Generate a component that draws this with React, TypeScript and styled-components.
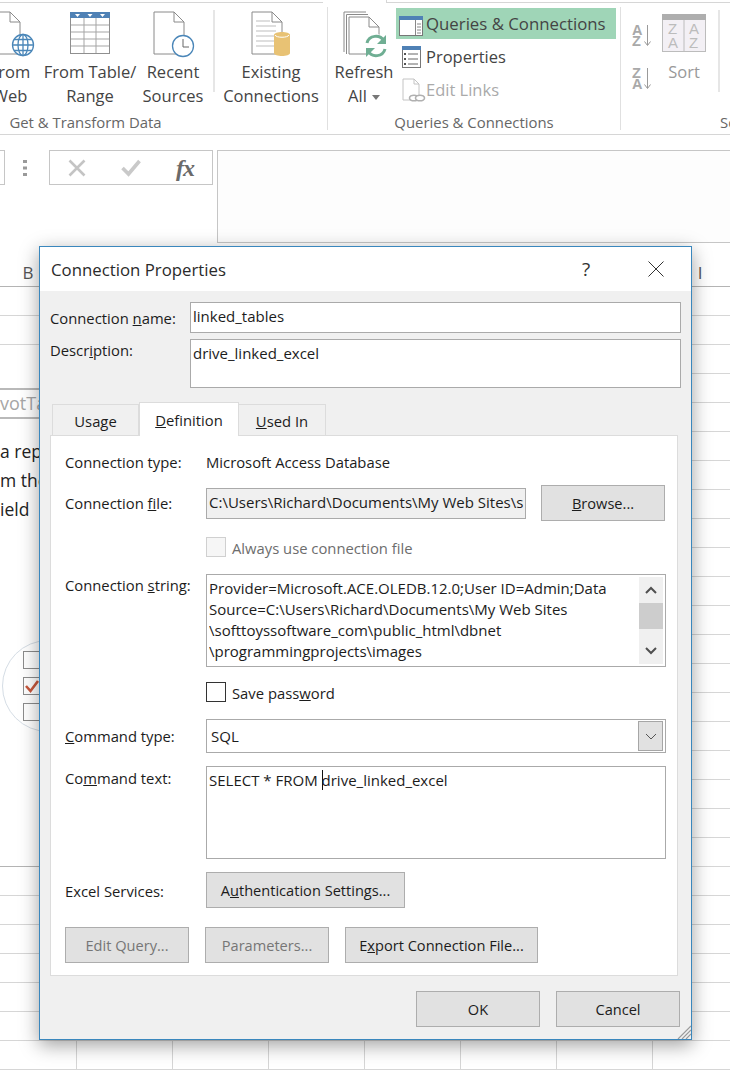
import React from "react";
import styled, { createGlobalStyle } from "styled-components";

const uiFont = `"Open Sans", "Noto Sans", sans-serif`;

const GlobalStyle = createGlobalStyle`
  html, body {
    margin: 0;
    padding: 0;
    background: #fff;
    font-family: ${uiFont};
  }
`;

const Page = styled.div`
  position: relative;
  width: 730px;
  height: 1072px;
  overflow: hidden;
  background: #fff;
`;

/* ribbon */
const Ribbon = styled.div`
  height: 135px;
  box-sizing: border-box;
  border-bottom: 1px solid #d6d6d6;
  color: #444;
`;
const RibbonEdge = styled.div`
  display: flex;
  height: 3px;
  box-sizing: border-box;
`;
const EdgeLine = styled.div<{ $w?: number }>`
  ${({ $w }) => ($w ? `width: ${$w}px;` : "flex: 1;")}
  border-bottom: 1px solid #d6d6d6;
`;
const ActiveTabGap = styled.div`
  width: 64px;
  border-right: 1px solid #d6d6d6;
  box-sizing: border-box;
`;
const RibbonBody = styled.div`
  display: flex;
  margin-left: -156px;
`;
const Group = styled.div<{ $w: number; $line?: boolean }>`
  width: ${({ $w }) => $w}px;
  flex: none;
  box-sizing: border-box;
  margin-top: 4px;
  height: 123px;
  display: flex;
  flex-direction: column;
  border-right: ${({ $line }) => ($line ? "1px solid #e0e0e0" : "none")};
`;
const GroupItems = styled.div<{ $pl?: number }>`
  display: flex;
  height: 105px;
  padding-top: 3px;
  box-sizing: border-box;
  padding-left: ${({ $pl }) => $pl ?? 0}px;
`;
const GroupLabel = styled.div<{ $pl?: number }>`
  font-size: 14.9px;
  line-height: 20px;
  height: 18px;
  color: #666;
  white-space: nowrap;
  text-align: ${({ $pl }) => ($pl ? "left" : "center")};
  padding-left: ${({ $pl }) => $pl ?? 0}px;
`;
const LargeButton = styled.div<{ $w: number; $ml?: number }>`
  width: ${({ $w }) => $w}px;
  margin-left: ${({ $ml }) => $ml ?? 0}px;
  flex: none;
  display: flex;
  flex-direction: column;
  align-items: center;
  font-size: 16.5px;
  line-height: 24px;
  white-space: nowrap;
  svg {
    flex: none;
    margin-bottom: 2px;
  }
`;
const SplitLabel = styled.span`
  display: flex;
  align-items: center;
  gap: 5px;
  svg {
    margin: 2px 0 0;
  }
`;
const InnerSeparator = styled.div<{ $ml?: number }>`
  width: 2px;
  height: 82px;
  flex: none;
  margin-left: ${({ $ml }) => $ml ?? 0}px;
  background: #e6e6e6;
`;
const SmallList = styled.div`
  width: 220px;
  margin: -2px 0 0 2px;
  flex: none;
  display: flex;
  flex-direction: column;
  gap: 2px;
`;
const SmallItem = styled.div<{ $active?: boolean; $off?: boolean }>`
  height: 31px;
  display: flex;
  align-items: center;
  font-size: ${({ $active }) => ($active ? 16.8 : 16.5)}px;
  white-space: nowrap;
  background: ${({ $active }) => ($active ? "#9fd5b7" : "transparent")};
  color: ${({ $off }) => ($off ? "#aaa" : "#444")};
  svg {
    flex: none;
    width: 30px;
  }
`;
const SortStack = styled.div`
  display: flex;
  flex-direction: column;
  margin: 14px 0 0 11px;
  gap: 21px;
  width: 21px;
  flex: none;
`;
const SortButton = styled(LargeButton)`
  color: #999;
  svg {
    margin-top: 4px;
    margin-bottom: 8px;
  }
`;

/* formula bar */
const FormulaBar = styled.div`
  height: 108px;
  box-sizing: border-box;
  padding-top: 15px;
  display: flex;
  align-items: flex-start;
`;
const NameBoxEnd = styled.div`
  width: 5px;
  height: 35px;
  box-sizing: border-box;
  border: 1px solid #c6c6c6;
  border-left: none;
`;
const Grip = styled.div`
  width: 44px;
  height: 35px;
  flex: none;
  display: flex;
  align-items: center;
  justify-content: center;
  padding-right: 4px;
  box-sizing: border-box;
`;
const FormulaTools = styled.div`
  width: 164px;
  height: 35px;
  flex: none;
  box-sizing: border-box;
  border: 1px solid #c6c6c6;
  display: flex;
  align-items: center;
  justify-content: space-between;
  padding: 0 18px 0 18px;
`;
const FxLabel = styled.span`
  font-family: "Liberation Serif", serif;
  font-style: italic;
  font-weight: bold;
  font-size: 24px;
  letter-spacing: -1px;
  line-height: 30px;
  color: #6a6a6a;
`;
const FormulaInput = styled.div`
  flex: 1;
  margin-left: 4px;
  height: 93px;
  box-sizing: border-box;
  border: 1px solid #c6c6c6;
  border-right: none;
  background: #fdfdfd;
`;

/* sheet */
const HeaderRow = styled.div`
  display: flex;
  height: 44px;
  margin-left: -20px;
  box-sizing: border-box;
  border-bottom: 1px solid #b4b4b4;
`;
const ColumnHead = styled.div`
  width: 96px;
  flex: none;
  text-align: center;
  font-size: 17px;
  line-height: 20px;
  padding-top: 20px;
  color: #555;
`;
const SheetRow = styled.div`
  display: flex;
  height: 29px;
  margin-left: -19px;
`;
const Cell = styled.div`
  width: 96px;
  flex: none;
  box-sizing: border-box;
  border-right: 1px solid #d6d6d6;
  border-bottom: 1px solid #d6d6d6;
`;

/* pivot table placeholder that lies on the sheet */
const PivotPlaceholder = styled.div`
  position: absolute;
  left: 0;
  top: 345px;
  width: 60px;
  height: 522px;
  box-sizing: border-box;
  background: #fff;
  border-bottom: 1px solid #b4b4b4;
  padding-top: 43px;
  overflow: hidden;
`;
const PivotName = styled.div`
  height: 31px;
  box-sizing: border-box;
  border-top: 2px solid #b9b9b9;
  border-bottom: 2px solid #b9b9b9;
  font-size: 18px;
  line-height: 27px;
  color: #a6a6a6;
  white-space: nowrap;
`;
const PivotHint = styled.div`
  margin-top: 18px;
  font-size: 17.5px;
  line-height: 29px;
  color: #222;
  white-space: nowrap;
`;
const FieldCircle = styled.div`
  margin: 116px 0 0 2px;
  width: 92px;
  height: 92px;
  box-sizing: border-box;
  border: 1px solid #d5dde5;
  border-radius: 50%;
  padding: 10px 0 0 20px;
  display: flex;
  flex-direction: column;
  gap: 8px;
`;
const FieldBox = styled.div`
  width: 18px;
  height: 18px;
  box-sizing: border-box;
  border: 1px solid #8c8c8c;
  background: #fff;
  svg {
    display: block;
  }
`;

/* dialog */
const Dialog = styled.div`
  position: absolute;
  left: 39px;
  top: 246px;
  width: 653px;
  height: 794px;
  box-sizing: border-box;
  border: 1px solid #3a87bd;
  background: #f0f0f0;
  box-shadow: 0 5px 18px rgba(0, 0, 0, 0.38);
  color: #1c1c1c;
  font-size: 14.8px;
  display: flex;
  flex-direction: column;
`;
const TitleBar = styled.div`
  height: 44px;
  flex: none;
  background: #fff;
  display: flex;
  align-items: center;
  padding-left: 11px;
`;
const Title = styled.div`
  flex: 1;
  font-size: 16.8px;
  color: #2a2a2a;
`;
const HelpMark = styled.div`
  width: 70px;
  font-size: 19px;
  color: #333;
  text-align: center;
`;
const CloseMark = styled.div`
  width: 70px;
  display: flex;
  justify-content: center;
`;
const DialogBody = styled.div`
  flex: 1;
  padding: 11px 10px 0;
  display: flex;
  flex-direction: column;
`;
const MetaRow = styled.div<{ $mt?: number }>`
  display: flex;
  margin-top: ${({ $mt }) => $mt ?? 0}px;
`;
const MetaLabel = styled.div<{ $pt: number }>`
  width: 140px;
  flex: none;
  padding-top: ${({ $pt }) => $pt}px;
  line-height: 20px;
`;
const TextBox = styled.div<{ $h: number; $grey?: boolean; $w?: number }>`
  ${({ $w }) => ($w ? `width: ${$w}px; flex: none;` : "flex: 1;")}
  height: ${({ $h }) => $h}px;
  box-sizing: border-box;
  border: 1px solid #aaa;
  background: ${({ $grey }) => ($grey ? "#f0f0f0" : "#fff")};
  padding: 2px;
  font-size: 15px;
  line-height: 22px;
  white-space: nowrap;
  overflow: hidden;
`;
const Tabs = styled.div`
  display: flex;
  align-items: flex-end;
  margin: 14px 0 0 2px;
  height: 34px;
  position: relative;
  z-index: 1;
`;
const Tab = styled.div<{ $active?: boolean }>`
  box-sizing: border-box;
  width: ${({ $active }) => ($active ? 100 : 87)}px;
  height: ${({ $active }) => ($active ? 34 : 32)}px;
  border: 1px solid #dcdcdc;
  border-left-width: ${({ $active }) => ($active ? 1 : 0)}px;
  border-bottom: ${({ $active }) => ($active ? "none" : "1px solid #dcdcdc")};
  background: ${({ $active }) => ($active ? "#fff" : "#f0f0f0")};
  text-align: center;
  line-height: ${({ $active }) => ($active ? 34 : 33)}px;
  &:first-child {
    border-left-width: 1px;
  }
`;
const TabPanel = styled.div`
  width: 628px;
  height: 541px;
  margin-top: -1px;
  box-sizing: border-box;
  border: 1px solid #dcdcdc;
  background: #fff;
  padding: 14px 11px 0 14px;
  display: flex;
  flex-direction: column;
`;
const FormRow = styled.div<{ $mt?: number; $center?: boolean; $h?: number }>`
  display: flex;
  align-items: ${({ $center }) => ($center ? "center" : "flex-start")};
  margin-top: ${({ $mt }) => $mt ?? 0}px;
  ${({ $h }) => ($h ? `height: ${$h}px;` : "")}
`;
const FormLabel = styled.div<{ $pt?: number }>`
  width: 141px;
  flex: none;
  padding-top: ${({ $pt }) => $pt ?? 0}px;
  line-height: 22px;
  white-space: nowrap;
`;
const FormValue = styled.div`
  line-height: 24px;
`;
const PushButton = styled.div<{ $w: number; $off?: boolean; $ml?: number }>`
  width: ${({ $w }) => $w}px;
  height: 36px;
  flex: none;
  margin-left: ${({ $ml }) => $ml ?? 0}px;
  box-sizing: border-box;
  border: 1px solid #adadad;
  background: #e1e1e1;
  font-size: 14.6px;
  color: ${({ $off }) => ($off ? "#767676" : "#1c1c1c")};
  display: flex;
  align-items: center;
  justify-content: center;
  white-space: nowrap;
`;
const CheckRow = styled.div<{ $off?: boolean }>`
  display: flex;
  align-items: center;
  gap: 6px;
  color: ${({ $off }) => ($off ? "#6d6d6d" : "#1c1c1c")};
  line-height: 22px;
  height: 20px;
`;
const CheckText = styled.span`
  padding-top: 2px;
`;
const CheckBox = styled.div<{ $off?: boolean }>`
  width: 20px;
  height: 20px;
  box-sizing: border-box;
  border: 1px solid ${({ $off }) => ($off ? "#d0d0d0" : "#333")};
  background: ${({ $off }) => ($off ? "#f6f6f6" : "#fff")};
`;
const StringBox = styled.div`
  width: 460px;
  height: 93px;
  flex: none;
  box-sizing: border-box;
  border: 1px solid #aaa;
  display: flex;
  padding: 2px;
`;
const StringText = styled.div`
  flex: 1;
  padding-top: 1px;
  font-size: 15px;
  line-height: 21px;
  white-space: nowrap;
  overflow: hidden;
`;
const ScrollBar = styled.div`
  width: 24px;
  flex: none;
  background: #f0f0f0;
  display: flex;
  flex-direction: column;
  align-items: center;
`;
const ScrollArrow = styled.div`
  height: 26px;
  flex: none;
  width: 100%;
  display: flex;
  align-items: center;
  justify-content: center;
`;
const ScrollThumb = styled.div`
  height: 26px;
  width: 100%;
  flex: none;
  background: #cdcdcd;
`;
const ScrollTrack = styled.div`
  flex: 1;
`;
const SelectBox = styled.div`
  width: 460px;
  height: 34px;
  flex: none;
  box-sizing: border-box;
  border: 1px solid #aaa;
  display: flex;
  align-items: center;
  justify-content: space-between;
  padding: 0 2px 0 4px;
  font-size: 15px;
`;
const SelectArrow = styled.div`
  width: 25px;
  height: 30px;
  box-sizing: border-box;
  border: 1px solid #a6a6a6;
  background: #e1e1e1;
  display: flex;
  align-items: center;
  justify-content: center;
`;
const CommandBox = styled.div`
  width: 460px;
  height: 93px;
  flex: none;
  box-sizing: border-box;
  border: 1px solid #aaa;
  padding: 2px;
  font-size: 15px;
  line-height: 22px;
`;
const Caret = styled.span`
  border-left: 1px solid #111;
  margin-right: -1px;
`;
const ButtonRow = styled.div<{ $mt: number; $right?: boolean }>`
  display: flex;
  gap: 16px;
  margin-top: ${({ $mt }) => $mt}px;
  margin-right: ${({ $right }) => ($right ? 1 : 0)}px;
  justify-content: ${({ $right }) => ($right ? "flex-end" : "flex-start")};
`;
const ResizeGrip = styled.svg`
  position: absolute;
  right: 0;
  bottom: 0;
`;

const WebIcon = () => (
  <svg width="50" height="48" viewBox="0 0 50 48">
    <path d="M10 2H25L35 12V44H10Z" fill="#fff" stroke="#8a8a8a" />
    <path d="M25 2V12H35" fill="none" stroke="#8a8a8a" />
    <g fill="#fff" stroke="#4a86b8" strokeWidth="1.3">
      <circle cx="38" cy="35" r="10.5" />
      <ellipse cx="38" cy="35" rx="5" ry="10.5" />
      <path d="M38 24.5V45.5M27.5 35H48.5M29 29.5H47M29 40.5H47" />
    </g>
  </svg>
);

const TableIcon = () => (
  <svg width="42" height="48" viewBox="0 0 42 48">
    <rect x="1.5" y="2.5" width="39" height="41" fill="#fff" stroke="#8f8f8f" />
    <rect x="1" y="2" width="40" height="6" fill="#4f81b5" />
    <path d="M15 8V43M27 8V43M2 15H40M2 22H40M2 29H40M2 36H40" stroke="#a5a5a5" fill="none" />
    <path d="M6 4H11L8.5 7ZM18.5 4H23.5L21 7ZM31 4H36L33.5 7Z" fill="#fff" />
  </svg>
);

const RecentIcon = () => (
  <svg width="44" height="48" viewBox="0 0 44 48">
    <path d="M3 2H23L33 12V44H3Z" fill="#fff" stroke="#8a8a8a" />
    <path d="M23 2V12H33" fill="none" stroke="#8a8a8a" />
    <circle cx="32" cy="36" r="10.5" fill="#fff" stroke="#4a86b8" strokeWidth="1.3" />
    <path d="M32 29V37H38" fill="none" stroke="#666" />
  </svg>
);

const ExistingIcon = () => (
  <svg width="44" height="48" viewBox="0 0 44 48">
    <path d="M3 2H23L33 12V44H3Z" fill="#fff" stroke="#8a8a8a" />
    <path d="M23 2V12H33" fill="none" stroke="#8a8a8a" />
    <path d="M7 11H21M7 16H27M7 21H27M7 26H27M7 31H27M7 36H27" stroke="#bdbdbd" />
    <path d="M25 25C25 21 41 21 41 25V43C41 47 25 47 25 43Z" fill="#e8c274" />
    <path d="M26 25C27 28 39 28 40 25" fill="none" stroke="#fff" />
  </svg>
);

const RefreshIcon = () => (
  <svg width="50" height="48" viewBox="0 0 50 48">
    <path d="M5 42V2H27M7.5 44V4.500H29M10 44V7H30L40 17V44Z" fill="#fff" stroke="#8a8a8a" />
    <path d="M30 7V17H40" fill="none" stroke="#8a8a8a" />
    <circle cx="37" cy="36" r="12" fill="#fff" />
    <path d="M28 33C30 25 41 24 45 31" fill="none" stroke="#6fae93" strokeWidth="3" />
    <path d="M47 25V34H38Z" fill="#6fae93" />
    <path d="M46 39C44 47 33 48 29 41" fill="none" stroke="#6fae93" strokeWidth="3" />
    <path d="M27 47V38H36Z" fill="#6fae93" />
  </svg>
);

const DropCaret = () => (
  <svg width="8" height="5" viewBox="0 0 8 5">
    <path d="M0 0H8L4 5Z" fill="#777" />
  </svg>
);

const QueriesIcon = () => (
  <svg height="24" viewBox="0 0 30 24">
    <rect x="3.500" y="4.500" width="23" height="19" fill="#fff" stroke="#777" />
    <rect x="3" y="4" width="24" height="4" fill="#4f81b5" />
    <path d="M19.500 8V23M21 12H25M21 15H25M21 18H25M21 21H25" stroke="#888" fill="none" />
  </svg>
);

const PropertiesIcon = () => (
  <svg height="24" viewBox="0 0 30 24">
    <rect x="6.500" y="1.500" width="18" height="21" fill="#fff" stroke="#777" />
    <rect x="6" y="1" width="19" height="4" fill="#4f81b5" />
    <path d="M12 9H22M12 14H22M12 19H22" stroke="#666" fill="none" />
    <path d="M8 9H10M8 14H10M8 19H10" stroke="#555" strokeWidth="2" fill="none" />
  </svg>
);

const EditLinksIcon = () => (
  <svg height="24" viewBox="0 0 30 24">
    <path d="M7 1H18L23 6V22H7Z" fill="#fff" stroke="#c4c4c4" />
    <path d="M18 1V6H23" fill="none" stroke="#c4c4c4" />
    <g fill="#fff" stroke="#b0b0b0" strokeWidth="1.6">
      <ellipse cx="18" cy="20" rx="4.500" ry="2.800" />
      <ellipse cx="24" cy="20" rx="4.500" ry="2.800" />
    </g>
  </svg>
);

const SortLetters = ({ top, bottom }: { top: string; bottom: string }) => (
  <svg width="21" height="22" viewBox="0 0 21 22" display="block">
    <text x="0" y="10.500" fontFamily="Liberation Sans, sans-serif" fontWeight="bold" fontSize="14.500" fill="#a9a9a9">
      {top}
    </text>
    <text x="0" y="21.500" fontFamily="Liberation Sans, sans-serif" fontWeight="bold" fontSize="14.500" fill="#a9a9a9">
      {bottom}
    </text>
    <path d="M15.500 1V21M12.500 17.500L15.500 21.500L18.500 17.500" fill="none" stroke="#9a9a9a" />
  </svg>
);

const SortIcon = () => (
  <svg width="44" height="38" viewBox="0 0 44 38" fontFamily="Liberation Sans, sans-serif" fontSize="15" fill="#bcbcbc">
    <rect x="0.500" y="0.500" width="43" height="37" fill="#f3f0f5" stroke="#bcbcbc" />
    <rect x="0" y="0" width="44" height="6" fill="#aeaeae" />
    <path d="M22 6V38" stroke="#bcbcbc" />
    <text x="6" y="20">Z</text>
    <text x="6" y="34">A</text>
    <text x="27" y="20">A</text>
    <text x="27" y="34">Z</text>
  </svg>
);

const DotsIcon = () => (
  <svg width="4" height="16" viewBox="0 0 4 16">
    <path d="M0 0H4V3H0ZM0 6.500H4V9.500H0ZM0 13H4V16H0Z" fill="#9a9a9a" />
  </svg>
);

const CancelIcon = () => (
  <svg width="18" height="18" viewBox="0 0 18 18">
    <path d="M1.500 1.500L16.500 16.500M16.500 1.500L1.500 16.500" stroke="#c4c4c4" strokeWidth="2.600" />
  </svg>
);

const EnterIcon = () => (
  <svg width="20" height="18" viewBox="0 0 20 18">
    <path d="M1.500 9L7.500 15L18.500 2" fill="none" stroke="#c9c9c9" strokeWidth="3.600" />
  </svg>
);

const CloseIcon = () => (
  <svg width="16" height="16" viewBox="0 0 16 16">
    <path d="M0.500 0.500L15.500 15.500M15.500 0.500L0.500 15.500" stroke="#333" strokeWidth="1" />
  </svg>
);

const Chevron = ({ up }: { up?: boolean }) => (
  <svg width="12" height="8" viewBox="0 0 12 8">
    <path d={up ? "M1 7L6 2L11 7" : "M1 1L6 6L11 1"} fill="none" stroke="#505050" strokeWidth="2" />
  </svg>
);

const rows = Array.from({ length: 27 }, (_, i) => i);
// only the outer headers stick out from under the dialog
const columns = ["B", "", "", "", "", "", "", "I"];

export default function App() {
  return (
    <Page>
      <GlobalStyle />
      <Ribbon>
        <RibbonEdge>
          <EdgeLine $w={323} />
          <ActiveTabGap />
          <EdgeLine />
        </RibbonEdge>
        <RibbonBody>
          <Group $w={484} $line>
            <GroupItems $pl={126}>
              <LargeButton $w={80}>
                <WebIcon />
                <span>From</span>
                <span>Web</span>
              </LargeButton>
              <LargeButton $w={80}>
                <TableIcon />
                <span>From Table/</span>
                <span>Range</span>
              </LargeButton>
              <LargeButton $w={80} $ml={3}>
                <RecentIcon />
                <span>Recent</span>
                <span>Sources</span>
              </LargeButton>
              <InnerSeparator />
              <LargeButton $w={112}>
                <ExistingIcon />
                <span>Existing</span>
                <span>Connections</span>
              </LargeButton>
            </GroupItems>
            <GroupLabel>Get &amp; Transform Data</GroupLabel>
          </Group>
          <Group $w={293} $line>
            <GroupItems $pl={6}>
              <LargeButton $w={60}>
                <RefreshIcon />
                <span>Refresh</span>
                <SplitLabel>
                  All
                  <DropCaret />
                </SplitLabel>
              </LargeButton>
              <SmallList>
                <SmallItem $active>
                  <QueriesIcon />
                  Queries &amp; Connections
                </SmallItem>
                <SmallItem>
                  <PropertiesIcon />
                  Properties
                </SmallItem>
                <SmallItem $off>
                  <EditLinksIcon />
                  Edit Links
                </SmallItem>
              </SmallList>
            </GroupItems>
            <GroupLabel>Queries &amp; Connections</GroupLabel>
          </Group>
          <Group $w={200}>
            <GroupItems>
              <SortStack>
                <SortLetters top="A" bottom="Z" />
                <SortLetters top="Z" bottom="A" />
              </SortStack>
              <SortButton $w={44} $ml={9}>
                <SortIcon />
                <span>Sort</span>
              </SortButton>
              <InnerSeparator $ml={12} />
            </GroupItems>
            <GroupLabel $pl={99}>Sort &amp; Filter</GroupLabel>
          </Group>
        </RibbonBody>
      </Ribbon>

      <FormulaBar>
        <NameBoxEnd />
        <Grip>
          <DotsIcon />
        </Grip>
        <FormulaTools>
          <CancelIcon />
          <EnterIcon />
          <FxLabel>fx</FxLabel>
        </FormulaTools>
        <FormulaInput />
      </FormulaBar>

      <HeaderRow>
        {columns.map((c, i) => (
          <ColumnHead key={i}>{c}</ColumnHead>
        ))}
      </HeaderRow>
      {rows.map((r) => (
        <SheetRow key={r}>
          {columns.map((_, i) => (
            <Cell key={i} />
          ))}
        </SheetRow>
      ))}

      <PivotPlaceholder>
        <PivotName>votTa</PivotName>
        <PivotHint>
          a rep
          <br />m the
          <br />
          ield
        </PivotHint>
        <FieldCircle>
          <FieldBox />
          <FieldBox>
            <svg width="16" height="16" viewBox="0 0 16 16">
              <path d="M2 8L6.500 13L14 3" fill="none" stroke="#c8573c" strokeWidth="2.600" />
            </svg>
          </FieldBox>
          <FieldBox />
        </FieldCircle>
      </PivotPlaceholder>

      <Dialog>
        <TitleBar>
          <Title>Connection Properties</Title>
          <HelpMark>?</HelpMark>
          <CloseMark>
            <CloseIcon />
          </CloseMark>
        </TitleBar>
        <DialogBody>
          <MetaRow>
            <MetaLabel $pt={6}>
              Connection <u>n</u>ame:
            </MetaLabel>
            <TextBox $h={31}>linked_tables</TextBox>
          </MetaRow>
          <MetaRow $mt={6}>
            <MetaLabel $pt={1}>
              Descr<u>i</u>ption:
            </MetaLabel>
            <TextBox $h={49}>drive_linked_excel</TextBox>
          </MetaRow>

          <Tabs>
            <Tab>Usage</Tab>
            <Tab $active>
              <u>D</u>efinition
            </Tab>
            <Tab>
              <u>U</u>sed In
            </Tab>
          </Tabs>
          <TabPanel>
            <FormRow $h={24}>
              <FormLabel $pt={1}>Connection type:</FormLabel>
              <FormValue>Microsoft Access Database</FormValue>
            </FormRow>
            <FormRow $mt={11} $h={36} $center>
              <FormLabel>
                Connection <u>f</u>ile:
              </FormLabel>
              <TextBox $h={31} $w={320} $grey>
                C:\Users\Richard\Documents\My Web Sites\s
              </TextBox>
              <PushButton $w={124} $ml={15}>
                <span>
                  <u>B</u>rowse...
                </span>
              </PushButton>
            </FormRow>
            <FormRow $mt={16}>
              <FormLabel />
              <CheckRow $off>
                <CheckBox $off />
                <CheckText>Always use connection file</CheckText>
              </CheckRow>
            </FormRow>
            <FormRow $mt={17}>
              <FormLabel>
                Connection <u>s</u>tring:
              </FormLabel>
              <StringBox>
                <StringText>
                  Provider=Microsoft.ACE.OLEDB.12.0;User ID=Admin;Data
                  <br />
                  Source=C:\Users\Richard\Documents\My Web Sites
                  <br />
                  \softtoyssoftware_com\public_html\dbnet
                  <br />
                  \programmingprojects\images
                </StringText>
                <ScrollBar>
                  <ScrollArrow>
                    <Chevron up />
                  </ScrollArrow>
                  <ScrollThumb />
                  <ScrollTrack />
                  <ScrollArrow>
                    <Chevron />
                  </ScrollArrow>
                </ScrollBar>
              </StringBox>
            </FormRow>
            <FormRow $mt={15}>
              <FormLabel />
              <CheckRow>
                <CheckBox />
                <CheckText>
                  Save pass<u>w</u>ord
                </CheckText>
              </CheckRow>
            </FormRow>
            <FormRow $mt={17} $center>
              <FormLabel>
                <u>C</u>ommand type:
              </FormLabel>
              <SelectBox>
                SQL
                <SelectArrow>
                  <svg width="12" height="7" viewBox="0 0 12 7">
                    <path d="M1 1L6 6L11 1" fill="none" stroke="#555" />
                  </svg>
                </SelectArrow>
              </SelectBox>
            </FormRow>
            <FormRow $mt={13}>
              <FormLabel $pt={1}>
                Co<u>m</u>mand text:
              </FormLabel>
              <CommandBox>
                SELECT * FROM <Caret />
                drive_linked_excel
              </CommandBox>
            </FormRow>
            <FormRow $mt={13} $center>
              <FormLabel $pt={1}>Excel Services:</FormLabel>
              <PushButton $w={199}>
                <span>
                  A<u>u</u>thentication Settings...
                </span>
              </PushButton>
            </FormRow>
            <ButtonRow $mt={19}>
              <PushButton $w={124} $off>
                Edit Query...
              </PushButton>
              <PushButton $w={124} $off>
                Parameters...
              </PushButton>
              <PushButton $w={193}>
                <span>
                  E<u>x</u>port Connection File...
                </span>
              </PushButton>
            </ButtonRow>
          </TabPanel>
          <ButtonRow $mt={15} $right>
            <PushButton $w={124}>OK</PushButton>
            <PushButton $w={124}>Cancel</PushButton>
          </ButtonRow>
        </DialogBody>
        <ResizeGrip width="14" height="14" viewBox="0 0 14 14">
          <path d="M1 14L14 1M5 14L14 5M9 14L14 9" stroke="#9a9a9a" strokeWidth="1.200" />
        </ResizeGrip>
      </Dialog>
    </Page>
  );
}
